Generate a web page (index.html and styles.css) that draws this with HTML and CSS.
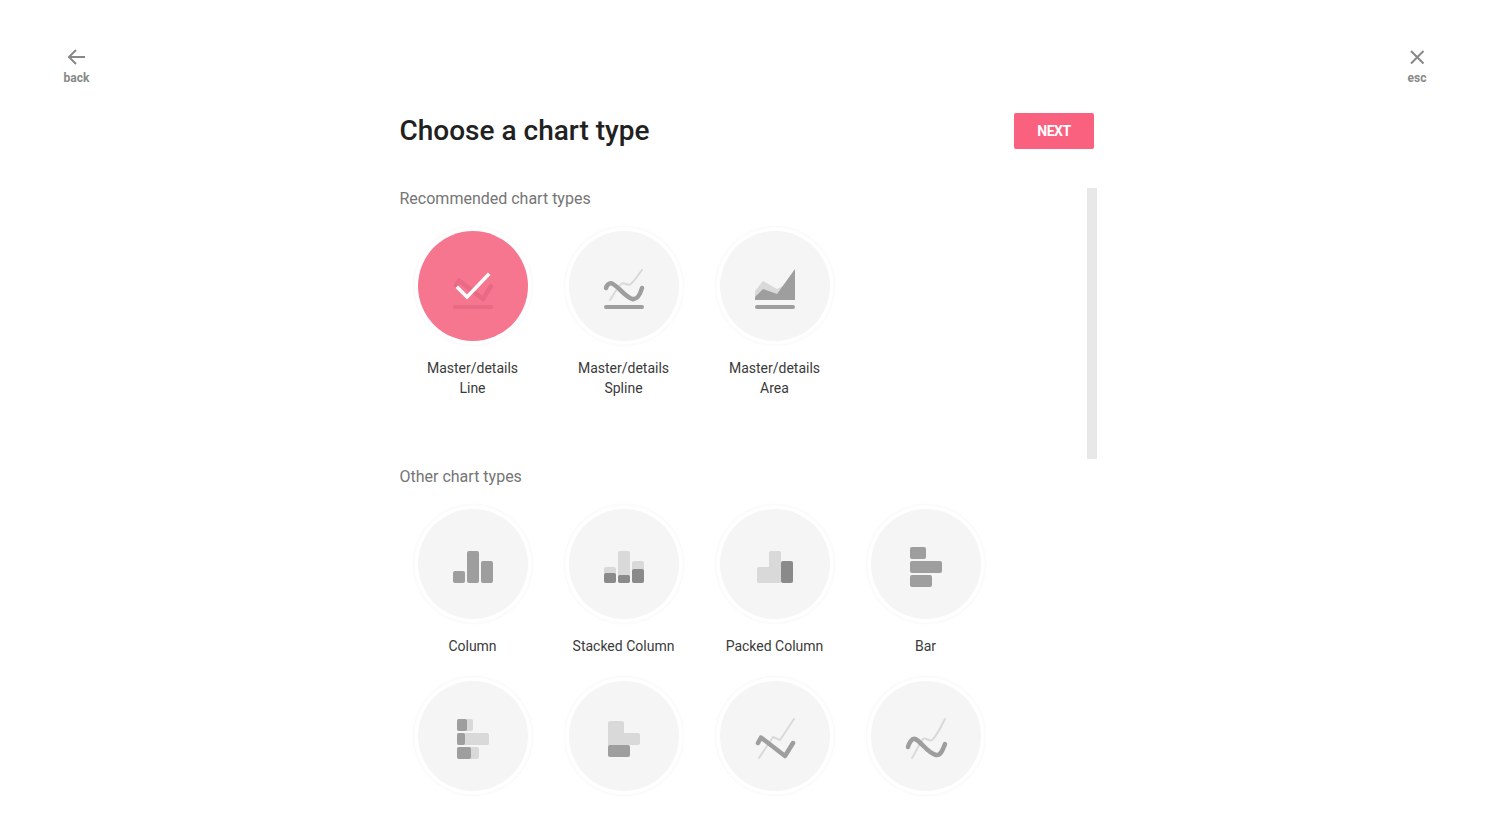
FILE: index.html
```html
<!DOCTYPE html>
<html lang="en">
<head>
<meta charset="utf-8">
<title>Choose a chart type</title>
<link rel="stylesheet" href="styles.css">
</head>
<body>
<header class="topbar">
  <a class="nav-btn">
    <svg class="nav-icon" viewBox="0 0 20 20"><path d="M18 10H2M9 3L2 10l7 7"/></svg>
    <span>back</span>
  </a>
  <a class="nav-btn">
    <svg class="nav-icon" viewBox="0 0 20 20"><path d="M4 4l12.500 12.500M16.500 4L4 16.500"/></svg>
    <span>esc</span>
  </a>
</header>
<main class="main">
  <div class="title-row">
    <h1 class="title">Choose a chart type</h1>
    <button class="next">NEXT</button>
  </div>
  <div class="panel">
    <div class="thumb"></div>
    <h2 class="section-title">Recommended chart types</h2>
    <div class="grid">
      <div class="item">
        <div class="circle selected">
          <svg class="icon" viewBox="0 0 40 40">
            <path class="sel-line" d="M3 17L6 11.500L30 30L38 17"/>
            <rect class="sel-base" x="0" y="36" width="40" height="4" rx="2"/>
            <path class="check" d="M5 19L14 28 35 6"/>
          </svg>
        </div>
        <div class="label">Master/details<br>Line</div>
      </div>
      <div class="item">
        <div class="circle">
          <svg class="icon" viewBox="0 0 40 40">
            <path class="thin" d="M6 31C10 25 14 17 18 14.500C21 13 23 17 26 15.500C30 13 34 6 38 1"/>
            <path class="thick" d="M2 19C3 16 5 13.500 8 14.500C14 17 20 27 28 30C33 31 36 26 38 19"/>
            <rect class="base" x="0" y="36" width="40" height="4" rx="2"/>
          </svg>
        </div>
        <div class="label">Master/details<br>Spline</div>
      </div>
      <div class="item">
        <div class="circle">
          <svg class="icon" viewBox="0 0 40 40">
            <path class="light" d="M0 22L8 12L22 20L30 16V31H0Z"/>
            <path class="mid" d="M0 29Q0 27 2 26L8 20L22 25L40 0V31H0Z"/>
            <rect class="base" x="0" y="36" width="40" height="4" rx="2"/>
          </svg>
        </div>
        <div class="label">Master/details<br>Area</div>
      </div>
    </div>

    <h2 class="section-title other">Other chart types</h2>
    <div class="grid">
      <div class="item">
        <div class="circle">
          <svg class="icon" viewBox="0 0 40 40">
            <rect class="mid" x="0" y="24" width="12" height="12" rx="2"/>
            <rect class="mid" x="14" y="4" width="12" height="32" rx="2"/>
            <rect class="mid" x="28" y="14" width="12" height="22" rx="2"/>
          </svg>
        </div>
        <div class="label">Column</div>
      </div>
      <div class="item">
        <div class="circle">
          <svg class="icon" viewBox="0 0 40 40">
            <rect class="light" x="0" y="20" width="12" height="16" rx="2"/>
            <rect class="light" x="14" y="4" width="12" height="32" rx="2"/>
            <rect class="light" x="28" y="14" width="12" height="22" rx="2"/>
            <rect class="dark" x="0" y="26" width="12" height="10" rx="2"/>
            <rect class="dark" x="14" y="28" width="12" height="8" rx="2"/>
            <rect class="dark" x="28" y="22" width="12" height="14" rx="2"/>
          </svg>
        </div>
        <div class="label">Stacked Column</div>
      </div>
      <div class="item">
        <div class="circle">
          <svg class="icon" viewBox="0 0 40 40">
            <rect class="light" x="2" y="20" width="24" height="16" rx="2"/>
            <rect class="light" x="14" y="4" width="12" height="32" rx="2"/>
            <rect class="dark" x="26" y="14" width="12" height="22" rx="2"/>
          </svg>
        </div>
        <div class="label">Packed Column</div>
      </div>
      <div class="item">
        <div class="circle">
          <svg class="icon" viewBox="0 0 40 40">
            <rect class="mid" x="4" y="0" width="16" height="12" rx="2"/>
            <rect class="mid" x="4" y="14" width="32" height="12" rx="2"/>
            <rect class="mid" x="4" y="28" width="22" height="12" rx="2"/>
          </svg>
        </div>
        <div class="label">Bar</div>
      </div>
      <div class="item">
        <div class="circle">
          <svg class="icon" viewBox="0 0 40 40">
            <rect class="light" x="4" y="0" width="16" height="12" rx="2"/>
            <rect class="light" x="4" y="14" width="32" height="12" rx="2"/>
            <rect class="light" x="4" y="28" width="22" height="12" rx="2"/>
            <rect class="mid" x="4" y="0" width="10" height="12" rx="2"/>
            <rect class="mid" x="4" y="14" width="8" height="12" rx="2"/>
            <rect class="mid" x="4" y="28" width="14" height="12" rx="2"/>
          </svg>
        </div>
      </div>
      <div class="item">
        <div class="circle">
          <svg class="icon" viewBox="0 0 40 40">
            <rect class="light" x="4" y="2" width="16" height="26" rx="2"/>
            <rect class="light" x="4" y="14" width="32" height="12" rx="2"/>
            <rect class="mid" x="4" y="26" width="22" height="12" rx="2"/>
          </svg>
        </div>
      </div>
      <div class="item">
        <div class="circle">
          <svg class="icon" viewBox="0 0 40 40">
            <path class="thin" d="M4 39L18 18L25 21L39 0"/>
            <path class="thick" d="M3 24L6 18.500L30 37L38 24"/>
          </svg>
        </div>
      </div>
      <div class="item">
        <div class="circle">
          <svg class="icon" viewBox="0 0 40 40">
            <path class="thin" d="M6 39C10 33 14 23 17 20C20 18 23 23 26 21C31 17 35 7 39 0"/>
            <path class="thick" d="M2 28C3 24 6 19 9 20C15 22 21 34 30 36C35 37 37 30 39 25"/>
          </svg>
        </div>
      </div>
    </div>
  </div>
</main>
</body>
</html>
```
FILE: styles.css
```css
* { box-sizing: border-box; }
html, body { margin: 0; height: 840px; overflow: hidden; background: #fff; }
body { font-family: Roboto, "Liberation Sans", sans-serif; color: #333; }

.topbar {
  display: flex;
  justify-content: space-between;
  height: 113px;
  padding: 47px 55px 0 56.5px;
}
.nav-btn {
  display: flex;
  flex-direction: column;
  align-items: center;
  width: 40px;
  font-size: 12px;
  font-weight: 700;
  line-height: 14px;
  color: #888;
}
.nav-icon {
  display: block;
  width: 20px;
  height: 20px;
  margin-bottom: 4px;
  fill: none;
  stroke: #888;
  stroke-width: 2;
}

.main { width: 694.5px; margin-left: 399.5px; }
.title-row {
  display: flex;
  justify-content: space-between;
  align-items: center;
  height: 36px;
}
.title {
  margin: 0;
  font-size: 28px;
  font-weight: 500;
  line-height: 36px;
  color: #212121;
}
.next {
  width: 80px;
  height: 36px;
  border: 0;
  border-radius: 2px;
  background: #f9617f;
  color: #fff;
  font: 700 14px/36px Roboto, sans-serif;
  letter-spacing: -0.5px;
  padding: 0;
}

.panel { position: relative; margin-top: 39px; padding-top: 1px; }
.thumb {
  position: absolute;
  top: 0;
  left: 687.5px;
  width: 10px;
  height: 271px;
  background: #e8e8e8;
}
.section-title {
  margin: 0 0 17px;
  font-size: 16px;
  font-weight: 400;
  line-height: 20px;
  color: #757575;
}
.section-title.other { margin-top: 69px; }

.grid {
  display: grid;
  grid-template-columns: repeat(4, 120px);
  column-gap: 31px;
  row-gap: 20px;
  margin-left: 13px;
}
.item { display: flex; flex-direction: column; align-items: center; }
.circle {
  width: 110px;
  height: 110px;
  margin: 5px;
  padding: 38px 35px 0;
  border-radius: 50%;
  background: #f5f5f5;
  box-shadow: 0 0 0 3.5px #fff, 0 0 0 5.5px #fbfbfb;
}
.circle.selected { background: #f67690; }
.label {
  margin-top: 12px;
  font-size: 14px;
  line-height: 20px;
  text-align: center;
  color: #3a3a3a;
  white-space: nowrap;
}

.icon { display: block; width: 40px; height: 40px; overflow: visible; }
.light { fill: #d9d9d9; }
.mid { fill: #9e9e9e; }
.dark { fill: #8a8a8a; }
.base { fill: #9e9e9e; }
.thick { fill: none; stroke: #9e9e9e; stroke-width: 4.500; stroke-linecap: round; stroke-linejoin: round; }
.thin { fill: none; stroke: #d9d9d9; stroke-width: 2; stroke-linecap: round; stroke-linejoin: round; }
.sel-base { fill: #e96a84; }
.sel-line { fill: none; stroke: #e96a84; stroke-width: 4.500; stroke-linecap: round; stroke-linejoin: round; }
.check { fill: none; stroke: #fff; stroke-width: 3.500; stroke-linecap: square; }
```
